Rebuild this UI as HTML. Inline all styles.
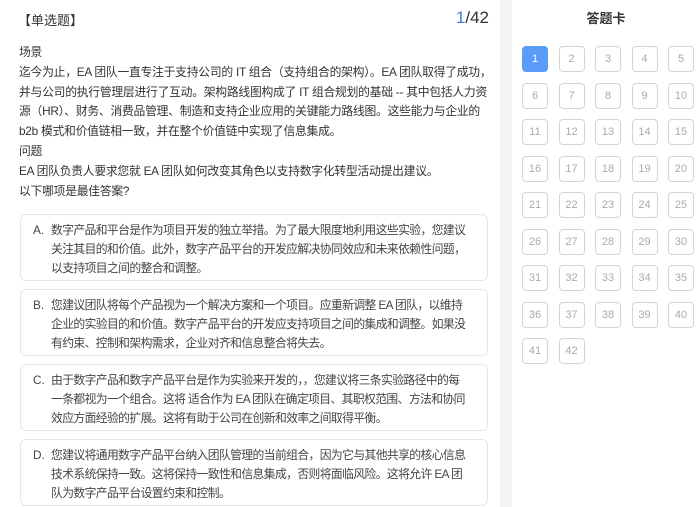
<!DOCTYPE html>
<html><head><meta charset="utf-8"><style>
*{margin:0;padding:0;box-sizing:border-box}
body{width:700px;height:507px;overflow:hidden;background:#fff;font-family:"Liberation Sans","Noto Sans CJK SC",sans-serif;color:#333;position:relative}
.left{position:absolute;left:0;top:0;width:500px;height:507px}
.hd{position:absolute;left:18px;top:10px;font-size:13px;color:#333}
.num{position:absolute;right:11px;top:8px;font-size:17px;color:#333}
.num b{color:#3a7ee0;font-weight:normal}
.body{position:absolute;left:19px;top:43px;width:480px;font-size:11.8px;letter-spacing:-0.25px;line-height:19.8px;color:#333;white-space:nowrap}
.opt{position:absolute;left:20px;width:468px;height:67px;border:1px solid #e6e6e6;border-radius:6px;font-size:11.8px;letter-spacing:-0.6px;line-height:19px;color:#444;padding:6px 0 0 30px;white-space:nowrap}
.opt span{position:absolute;left:12px;top:6px;letter-spacing:0}
.gap{position:absolute;left:500px;top:0;width:12px;height:507px;background:#f5f5f5}
.right{position:absolute;left:512px;top:0;width:188px;height:507px;background:#fff}
.rt{position:absolute;left:0;width:188px;top:8px;text-align:center;font-weight:bold;font-size:13px;color:#333}
.b{position:absolute;width:26px;height:26px;border:1px solid #d4d4d4;border-radius:4px;font-size:11px;color:#aaa;text-align:center;line-height:24px}
.b.on{background:#5b9cf8;border-color:#5b9cf8;color:#fff}
</style></head><body>
<div class="left">
<div class="hd">【单选题】</div>
<div class="num"><b>1</b>/42</div>
<div class="body">场景<br>迄今为止，EA 团队一直专注于支持公司的 IT 组合（支持组合的架构）。EA 团队取得了成功，<br>并与公司的执行管理层进行了互动。架构路线图构成了 IT 组合规划的基础 -- 其中包括人力资<br>源（HR）、财务、消费品管理、制造和支持企业应用的关键能力路线图。这些能力与企业的<br>b2b 模式和价值链相一致，并在整个价值链中实现了信息集成。<br>问题<br>EA 团队负责人要求您就 EA 团队如何改变其角色以支持数字化转型活动提出建议。<br>以下哪项是最佳答案?</div>
<div class="opt" style="top:214px"><span>A.</span>数字产品和平台是作为项目开发的独立举措。为了最大限度地利用这些实验，您建议<br>关注其目的和价值。此外，数字产品平台的开发应解决协同效应和未来依赖性问题，<br>以支持项目之间的整合和调整。</div>
<div class="opt" style="top:289px"><span>B.</span>您建议团队将每个产品视为一个解决方案和一个项目。应重新调整 EA 团队，以维持<br>企业的实验目的和价值。数字产品平台的开发应支持项目之间的集成和调整。如果没<br>有约束、控制和架构需求，企业对齐和信息整合将失去。</div>
<div class="opt" style="top:364px"><span>C.</span>由于数字产品和数字产品平台是作为实验来开发的，，您建议将三条实验路径中的每<br>一条都视为一个组合。这将 适合作为 EA 团队在确定项目、其职权范围、方法和协同<br>效应方面经验的扩展。这将有助于公司在创新和效率之间取得平衡。</div>
<div class="opt" style="top:439px"><span>D.</span>您建议将通用数字产品平台纳入团队管理的当前组合，因为它与其他共享的核心信息<br>技术系统保持一致。这将保持一致性和信息集成，否则将面临风险。这将允许 EA 团<br>队为数字产品平台设置约束和控制。</div>
</div>
<div class="gap"></div>
<div class="right"><div class="rt">答题卡</div>
<div id="g"></div></div>
<script>
var g=document.getElementById('g'),h='';
for(var i=0;i<42;i++){var c=i%5,r=Math.floor(i/5);
h+='<div class="b'+(i==0?' on':'')+'" style="left:'+(10+c*36.5)+'px;top:'+(46+r*36.5)+'px">'+(i+1)+'</div>';}
g.innerHTML=h;
</script>
</body></html>
